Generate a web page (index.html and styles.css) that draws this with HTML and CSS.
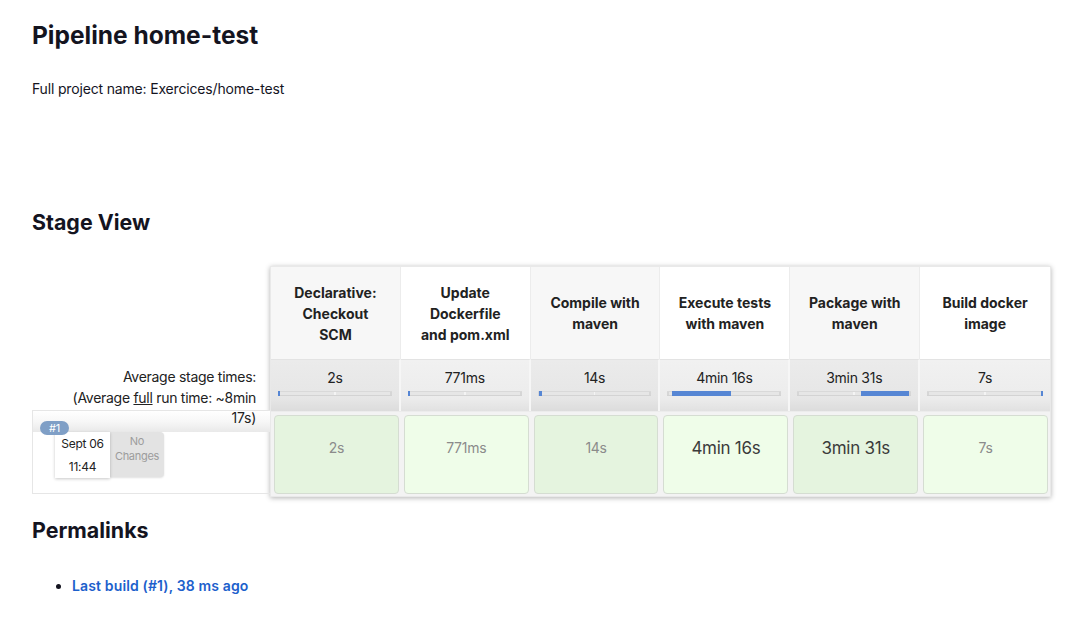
FILE: index.html
```html
<!DOCTYPE html>
<html>
<head>
<meta charset="utf-8">
<link rel="stylesheet" href="styles.css">
</head>
<body>
<h1 class="title">Pipeline home-test</h1>
<p class="fullname">Full project name: Exercices/home-test</p>

<h2 class="section stage-title">Stage View</h2>

<div class="stage-view">
  <div class="labels">
    <div class="label-head"></div>
    <div class="label-avg">Average stage times:<br>(Average <u>full</u> run time: ~8min 17s)</div>
    <div class="label-build">
      <div class="band"></div>
      <span class="badge">#1</span>
      <div class="build-info">
        <div class="date">Sept 06<br>11:44</div>
        <div class="changes">No<br>Changes</div>
      </div>
    </div>
  </div>

  <div class="stages">
    <div class="head odd">Declarative:<br>Checkout<br>SCM</div>
    <div class="head">Update<br>Dockerfile<br>and pom.xml</div>
    <div class="head odd">Compile with<br>maven</div>
    <div class="head">Execute tests<br>with maven</div>
    <div class="head odd">Package with<br>maven</div>
    <div class="head">Build docker<br>image</div>

    <div class="avg odd"><span>2s</span><div class="bar"><div class="fill" style="left:0%;width:1%"></div></div></div>
    <div class="avg"><span>771ms</span><div class="bar"><div class="fill" style="left:0.5%;width:1%"></div></div></div>
    <div class="avg odd"><span>14s</span><div class="bar"><div class="fill" style="left:1%;width:3%"></div></div></div>
    <div class="avg"><span>4min 16s</span><div class="bar"><div class="fill" style="left:4%;width:52%"></div></div></div>
    <div class="avg odd"><span>3min 31s</span><div class="bar"><div class="fill" style="left:55.5%;width:43%"></div></div></div>
    <div class="avg"><span>7s</span><div class="bar"><div class="fill" style="left:98%;width:1.5%"></div></div></div>

    <div class="cell odd"><div class="box">2s</div></div>
    <div class="cell"><div class="box">771ms</div></div>
    <div class="cell odd"><div class="box">14s</div></div>
    <div class="cell"><div class="box big">4min 16s</div></div>
    <div class="cell odd"><div class="box big">3min 31s</div></div>
    <div class="cell"><div class="box">7s</div></div>
  </div>
</div>

<h2 class="section perma-title">Permalinks</h2>
<ul class="permalinks">
  <li><a href="#">Last build (#1), 38 ms ago</a></li>
</ul>
</body>
</html>
```

FILE: styles.css
```css
* { box-sizing: border-box; }

body {
  margin: 0;
  padding: 20px 32px 0;
  font-family: Inter, "Noto Sans", "Liberation Sans", sans-serif;
  font-size: 14px;
  letter-spacing: -0.02em;
  color: #14141f;
  background: #fff;
}

.title {
  margin: 0;
  font-size: 24.5px;
  line-height: 30px;
  font-weight: 700;
  letter-spacing: 0;
}

.fullname {
  margin: 29px 0 0;
  line-height: 20px;
  letter-spacing: -0.012em;
}

.section {
  margin: 0;
  font-size: 21.4px;
  line-height: 28px;
  font-weight: 700;
  letter-spacing: 0;
}

.stage-title { margin-top: 109px; }

.stage-view {
  display: flex;
  margin-top: 30px;
}

.labels {
  width: 238px;
  flex: none;
  display: flex;
  flex-direction: column;
}

.label-head { height: 92px; }

.label-avg {
  height: 52px;
  padding: 9px 14px 0 30px;
  text-align: right;
  line-height: 20.5px;
  color: #222;
  position: relative;
  z-index: 2;
}

.label-build {
  position: relative;
  height: 84px;
  border: 1px solid #e6e6e6;
  border-right: none;
}

.band {
  height: 21px;
  background: linear-gradient(#ffffff, #f7f7f7 50%, #e9e9e9);
}

.badge {
  position: absolute;
  left: 7px;
  top: 10px;
  width: 29px;
  height: 14px;
  border-radius: 7px;
  background: #7f9fc6;
  color: #fff;
  font-size: 11px;
  line-height: 14px;
  text-align: center;
  z-index: 3;
}

.build-info {
  display: flex;
  margin-left: 22px;
}

.date {
  width: 55px;
  height: 46px;
  background: #fff;
  box-shadow: 0 1px 3px rgba(0,0,0,0.22);
  font-size: 12px;
  line-height: 23px;
  text-align: center;
  color: #222;
  position: relative;
  z-index: 1;
}

.changes {
  width: 54px;
  height: 45px;
  background: #e3e3e3;
  border-radius: 0 4px 4px 0;
  box-shadow: 0 1px 2px rgba(0,0,0,0.12);
  color: #9c9c9c;
  font-size: 11px;
  line-height: 15px;
  text-align: center;
  padding-top: 2px;
}

.stages {
  width: 782px;
  display: grid;
  grid-template-columns: repeat(6, 1fr);
  grid-template-rows: 92px 52px 85px;
  box-shadow: 0 1px 5px rgba(0,0,0,0.3);
  border: 1px solid #e9e9e9;
  background: #fff;
}

.head {
  display: flex;
  align-items: center;
  justify-content: center;
  text-align: center;
  font-weight: 700;
  letter-spacing: 0;
  line-height: 21px;
  color: #222;
  background: #fff;
  border-right: 1px solid #ececec;
}
.head.odd { background: #f7f7f7; }
.head:nth-child(6) { border-right: none; }

.avg {
  text-align: center;
  padding: 8px 7px 0;
  line-height: 20px;
  color: #222;
  background: linear-gradient(#f1f1f1, #ececec 75%, #e1e1e1);
  border-top: 1px solid #e3e3e3;
  border-right: 2px solid #f6f6f6;
}
.avg.odd { background: linear-gradient(#ebebeb, #e6e6e6 75%, #dcdcdc); }
.avg:nth-child(12) { border-right: none; }

.bar {
  position: relative;
  height: 5px;
  margin-top: 3px;
  background: linear-gradient(to right, #d6d6d6 0, #d6d6d6 1.5%, #e6e6e6 1.5%, #e6e6e6 49.5%, #f4f4f4 49.5%, #f4f4f4 50.5%, #e6e6e6 50.5%, #e6e6e6 98.5%, #d6d6d6 98.5%);
  border-top: 1px solid #d9d9d9;
  border-bottom: 1px solid #d3d3d3;
}

.fill {
  position: absolute;
  top: -1px;
  bottom: -1px;
  background: #5686d4;
  min-width: 2px;
}

.cell {
  padding: 3px 2px 2px 3px;
  background: #f3f3f3;
  border-top: 1px solid #ececec;
}

.box {
  height: 100%;
  border: 1px solid #d5ddd2;
  border-radius: 4px;
  background: #effde9;
  display: flex;
  align-items: flex-start;
  justify-content: center;
  padding-top: 22px;
  line-height: 20px;
  color: #8b8b8b;
  font-size: 14px;
}
.cell.odd .box { background: #e5f4df; }

.box.big {
  font-size: 17px;
  color: #3b3b3b;
}

.perma-title { margin-top: 19px; }

.permalinks {
  margin: 32px 0 0;
  padding-left: 40px;
  line-height: 20px;
}

.permalinks a {
  color: #1c60cc;
  font-weight: 600;
  letter-spacing: 0.01em;
  text-decoration: none;
}
```
